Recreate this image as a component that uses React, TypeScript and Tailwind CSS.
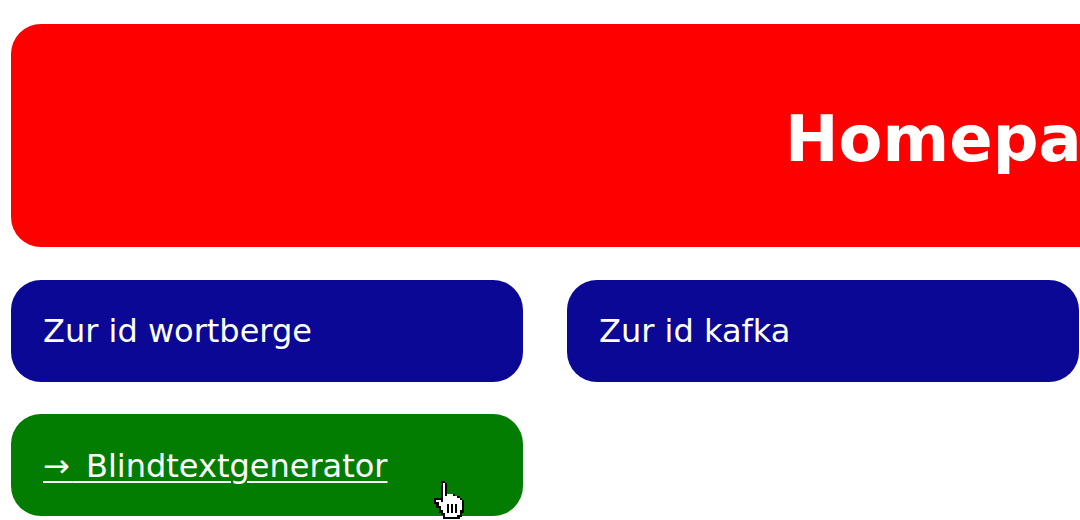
import React from "react";

function HandCursor() {
	return (
		<svg
			className="absolute left-[430px] top-[479px]"
			width="36"
			height="42"
			viewBox="0 0 17 20"
			shapeRendering="crispEdges"
		>
			<path
				d="M5 1h2v1h1v5h4v1h2v1h1v1h1v6h-1v2h-1v1h-8v-2h-1v-1h-1v-2h-1v-2h-1v-3h3v-6h1z"
				fill="#000"
			/>
			<path
				d="M5 2h2v6h1v-1h3v1h2v1h1v1h1v5h-1v2h-1v1h-6v-2h-1v-1h-1v-2h-1v-2h-1v-1h2v1h1v-9z"
				fill="#fff"
			/>
			<path d="M8 12h1v4h-1zM10 12h1v4h-1zM12 12h1v4h-1z" fill="#000" />
		</svg>
	);
}

export default function App() {
	return (
		<div className="relative w-[1080px] h-[520px] overflow-hidden bg-white font-['DejaVu_Sans',Verdana,sans-serif] text-white">
			<div className="pt-[24px] pl-[11px]">
				<div className="grid grid-cols-[512px_512px] gap-x-[44px] gap-y-[33px]">
					<header className="col-span-2 w-[1400px] h-[223px] rounded-[30px] bg-[#ff0000] flex items-center pl-[774px] pt-[6px]">
						<h1 className="text-[64px] font-bold leading-none">Homepage</h1>
					</header>
					<div className="h-[102px] rounded-[30px] bg-[#0a0895] px-[32px] flex items-center text-[32px]">
						Zur id wortberge
					</div>
					<div className="h-[102px] rounded-[30px] bg-[#0a0895] px-[32px] flex items-center text-[32px]">
						Zur id kafka
					</div>
				</div>
				<div className="mt-[32px] w-[512px] h-[102px] rounded-[30px] bg-[#027d02] px-[32px] pt-[2px] flex items-center text-[32px]">
					<a href="#" className="underline underline-offset-[4px] decoration-[2px] [word-spacing:3px]">
						<span className="tracking-[3px]">→</span> Blindtextgenerator
					</a>
				</div>
			</div>
			<HandCursor />
		</div>
	);
}
